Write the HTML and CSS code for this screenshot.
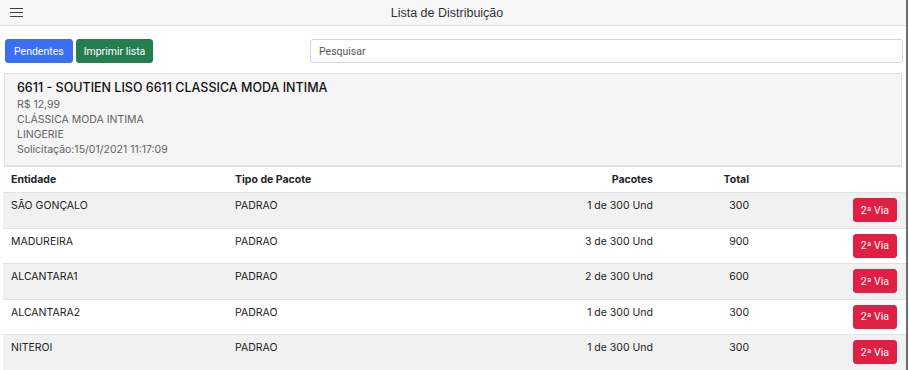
FILE: index.html
```html
<!DOCTYPE html>
<html lang="pt-BR">
<head>
  <meta charset="UTF-8">
  <title>Lista de Distribuição</title>
  <meta name="viewport" content="width=device-width, initial-scale=1">
  <link rel="stylesheet" href="styles.css">
</head>
<body>
  <div class="page">
    <!-- Barra superior -->
    <header class="topbar">
      <button class="menu-btn" aria-label="Menu">
        <span></span><span></span><span></span>
      </button>
      <div class="topbar-title">Lista de Distribuição</div>
    </header>

    <!-- Ações e busca -->
    <div class="toolbar">
      <button class="btn btn-primary">Pendentes</button>
      <button class="btn btn-success">Imprimir lista</button>
      <input class="search" type="text" placeholder="Pesquisar">
    </div>

    <!-- Produto -->
    <div class="product-card">
      <div class="product-title">6611 - SOUTIEN LISO 6611 CLASSICA MODA INTIMA</div>
      <div class="product-line">R$ 12,99</div>
      <div class="product-line">CLÁSSICA MODA INTIMA</div>
      <div class="product-line">LINGERIE</div>
      <div class="product-line">Solicitação:15/01/2021 11:17:09</div>
    </div>

    <!-- Distribuição -->
    <table class="dist-table">
      <thead>
        <tr>
          <th class="col-ent">Entidade</th>
          <th class="col-tipo">Tipo de Pacote</th>
          <th class="col-pac num">Pacotes</th>
          <th class="col-tot num">Total</th>
          <th class="col-act"></th>
        </tr>
      </thead>
      <tbody>
        <tr>
          <td>SÃO GONÇALO</td><td>PADRAO</td><td class="num">1 de 300 Und</td><td class="num">300</td>
          <td class="act"><button class="btn btn-danger">2ª Via</button></td>
        </tr>
        <tr>
          <td>MADUREIRA</td><td>PADRAO</td><td class="num">3 de 300 Und</td><td class="num">900</td>
          <td class="act"><button class="btn btn-danger">2ª Via</button></td>
        </tr>
        <tr>
          <td>ALCANTARA1</td><td>PADRAO</td><td class="num">2 de 300 Und</td><td class="num">600</td>
          <td class="act"><button class="btn btn-danger">2ª Via</button></td>
        </tr>
        <tr>
          <td>ALCANTARA2</td><td>PADRAO</td><td class="num">1 de 300 Und</td><td class="num">300</td>
          <td class="act"><button class="btn btn-danger">2ª Via</button></td>
        </tr>
        <tr>
          <td>NITEROI</td><td>PADRAO</td><td class="num">1 de 300 Und</td><td class="num">300</td>
          <td class="act"><button class="btn btn-danger">2ª Via</button></td>
        </tr>
      </tbody>
    </table>
  </div>
</body>
</html>
```

FILE: styles.css
```css
html {
  font-size: 11px;
}
body {
  margin: 0;
  background: #fff;
  font-family: Inter, 'Noto Sans', Arial, sans-serif;
  color: #212529;
  overflow: hidden;
}
.page {
  width: 906px;
  min-height: 100vh;
  border-right: 2px solid #6e6e6e;
}
.topbar {
  height: 25px;
  background: #f7f7f7;
  border-bottom: 1px solid #dcdcdc;
  display: grid;
  grid-template-columns: 34px 1fr 34px;
  align-items: center;
}
.menu-btn {
  background: none;
  border: none;
  padding: 0 0 0 10px;
  display: flex;
  flex-direction: column;
  gap: 2.5px;
  cursor: pointer;
}
.menu-btn span {
  display: block;
  width: 13px;
  height: 1.5px;
  background: #3f3f3f;
}
.topbar-title {
  text-align: center;
  font-family: 'Liberation Sans', Arial, sans-serif;
  font-size: 12.5px;
  color: #333;
  padding-right: 12px;
}
.toolbar {
  display: flex;
  align-items: center;
  gap: 3px;
  padding: 13px 3px 0 5px;
}
.btn {
  font-family: Roboto, Arial, sans-serif;
  font-size: 10.5px;
  color: #fff;
  border: 1px solid transparent;
  border-radius: 3px;
  padding: 0 8px;
  height: 24px;
  cursor: pointer;
}
.btn-primary {
  background: #3a6ff3;
  border-color: #3a6ff3;
}
.btn-success {
  background: #267d50;
  border-color: #267d50;
  padding: 0 7px;
}
.btn-danger {
  background: #df1f43;
  border-color: #df1f43;
}
.search {
  margin-left: auto;
  width: 593px;
  height: 24px;
  box-sizing: border-box;
  border: 1px solid #d6d6d6;
  border-radius: 3px;
  padding: 0 8px;
  font-family: Roboto, Arial, sans-serif;
  font-size: 10.5px;
  outline: none;
}
.search::placeholder {
  color: #555;
}
.product-card {
  margin: 10px 4px 0 4px;
  background: #f5f5f5;
  border: 1px solid #dedede;
  border-bottom: 2px solid #e2e2e2;
  padding: 6px 12px 8px 12px;
}
.product-title {
  font-size: 12.5px;
  font-weight: 500;
  color: #111;
  line-height: 16px;
  margin-bottom: 1px;
}
.product-line {
  font-size: 10.5px;
  color: #626262;
  line-height: 15px;
}
.dist-table {
  width: 903px;
  margin-left: 3px;
  border-collapse: collapse;
  table-layout: fixed;
  font-size: 10.5px;
}
.dist-table th {
  text-align: left;
  font-weight: 700;
  padding: 5px 8px 4px 8px;
  line-height: 16px;
}
.dist-table td {
  padding: 5px 8px 5px 8px;
  line-height: 16px;
  vertical-align: top;
  border-top: 1px solid #e3e3e3;
  height: 24.6px;
  color: #222;
}
.dist-table tbody tr:nth-child(odd) {
  background: #f1f1f1;
}
.col-ent { width: 208px; }
.col-tipo { width: 234px; }
.col-pac { width: 168px; }
.col-tot { width: 80px; }
.dist-table .num {
  text-align: right;
}
.dist-table td.act {
  text-align: right;
  padding-right: 9px;
}
.dist-table td.act .btn {
  font-size: 10.5px;
  padding: 0 7px;
  vertical-align: top;
}
```
